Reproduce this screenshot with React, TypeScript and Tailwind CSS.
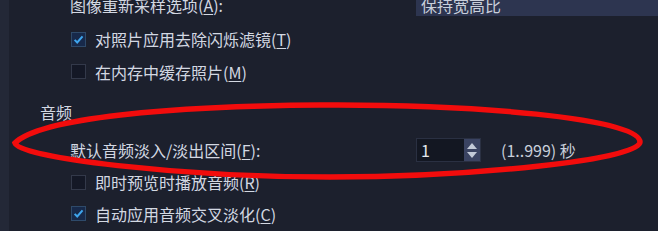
import type { ReactNode } from "react";

const font = { fontFamily: '"Noto Sans CJK SC", "Noto Sans", sans-serif' };

function Key({ k }: { k: string }) {
  return <span className="underline underline-offset-2">{k}</span>;
}

function Checkbox({ checked }: { checked: boolean }) {
  return (
    <div
      className={`ml-[1px] flex h-[15px] w-[15px] items-center justify-center border ${
        checked ? "border-[#2e4a6a] bg-[#17294a]" : "border-[#33394a] bg-[#141826]"
      }`}
    >
      {checked && (
        <svg viewBox="0 0 12 12" className="h-[11px] w-[11px]">
          <path d="M1.8 6.4 L4.6 9.2 L10.4 2.6" fill="none" stroke="#3fa6ee" strokeWidth="2.2" />
        </svg>
      )}
    </div>
  );
}

function CheckRow({ checked, children, className = "" }: { checked: boolean; children: ReactNode; className?: string }) {
  return (
    <div className={`flex items-center gap-[9px] ${className}`}>
      <Checkbox checked={checked} />
      <span>{children}</span>
    </div>
  );
}

export default function App() {
  return (
    <div
      className="relative flex h-[231px] w-[658px] overflow-hidden bg-[#1c202d] text-[16px] leading-none text-[#d3d8e2]"
      style={font}
    >
      <div className="w-[9px] shrink-0 bg-[#232837]" />
      <div className="flex flex-1 flex-col">
        {/* resample row, cut off at the top */}
        <div className="mt-[-6px] flex h-[22px] items-center pl-[61px]">
          <span className="w-[346px] shrink-0">
            图像重新采样选项(<Key k="A" />):
          </span>
          <div className="flex h-full flex-1 items-center bg-[#2d3550] pl-[5px] text-[#c9cfdb]">保持宽高比</div>
        </div>

        <CheckRow checked className="mt-[7px] h-[32px] pl-[61px]">
          对照片应用去除闪烁滤镜(<Key k="T" />)
        </CheckRow>
        <CheckRow checked={false} className="h-[33px] pl-[61px]">
          在内存中缓存照片(<Key k="M" />)
        </CheckRow>

        <div className="mt-[12px] flex h-[24px] items-center pl-[31px]">音频</div>

        {/* fade interval */}
        <div className="mt-[10px] flex h-[32px] items-center pl-[61px]">
          <span className="w-[346px] shrink-0">
            默认音频淡入/淡出区间(<Key k="F" />):
          </span>
          <div className="flex h-[24px] w-[65px] border border-[#2a3042]">
            <div className="flex flex-1 items-center bg-[#131722] pl-[4px] text-[#e4e8ef]">1</div>
            <div className="flex w-[16px] flex-col items-center justify-center gap-[3px] bg-[#3a4362]">
              <svg viewBox="0 0 10 6" className="h-[6px] w-[10px]">
                <path d="M0 6 L5 0 L10 6 Z" fill="#c3cad8" />
              </svg>
              <svg viewBox="0 0 10 6" className="h-[6px] w-[10px]">
                <path d="M0 0 L5 6 L10 0 Z" fill="#c3cad8" />
              </svg>
            </div>
          </div>
          <span className="ml-[20px] text-[#c9cfdb]">(1..999) 秒</span>
        </div>

        <CheckRow checked={false} className="h-[32px] pl-[61px]">
          即时预览时播放音频(<Key k="R" />)
        </CheckRow>
        <CheckRow checked className="h-[31px] pl-[61px]">
          自动应用音频交叉淡化(<Key k="C" />)
        </CheckRow>
      </div>

      {/* red hand-drawn annotation */}
      <svg className="pointer-events-none absolute inset-0" width="658" height="231" viewBox="0 0 658 231">
        <path
          d="M15 143 C40 118 170 106 320 105 C470 104 640 118 640 142 C640 160 470 177 330 177 C180 177 20 158 15 143 Z"
          fill="none"
          stroke="#f20c0c"
          strokeWidth="5.5"
        />
      </svg>
    </div>
  );
}
